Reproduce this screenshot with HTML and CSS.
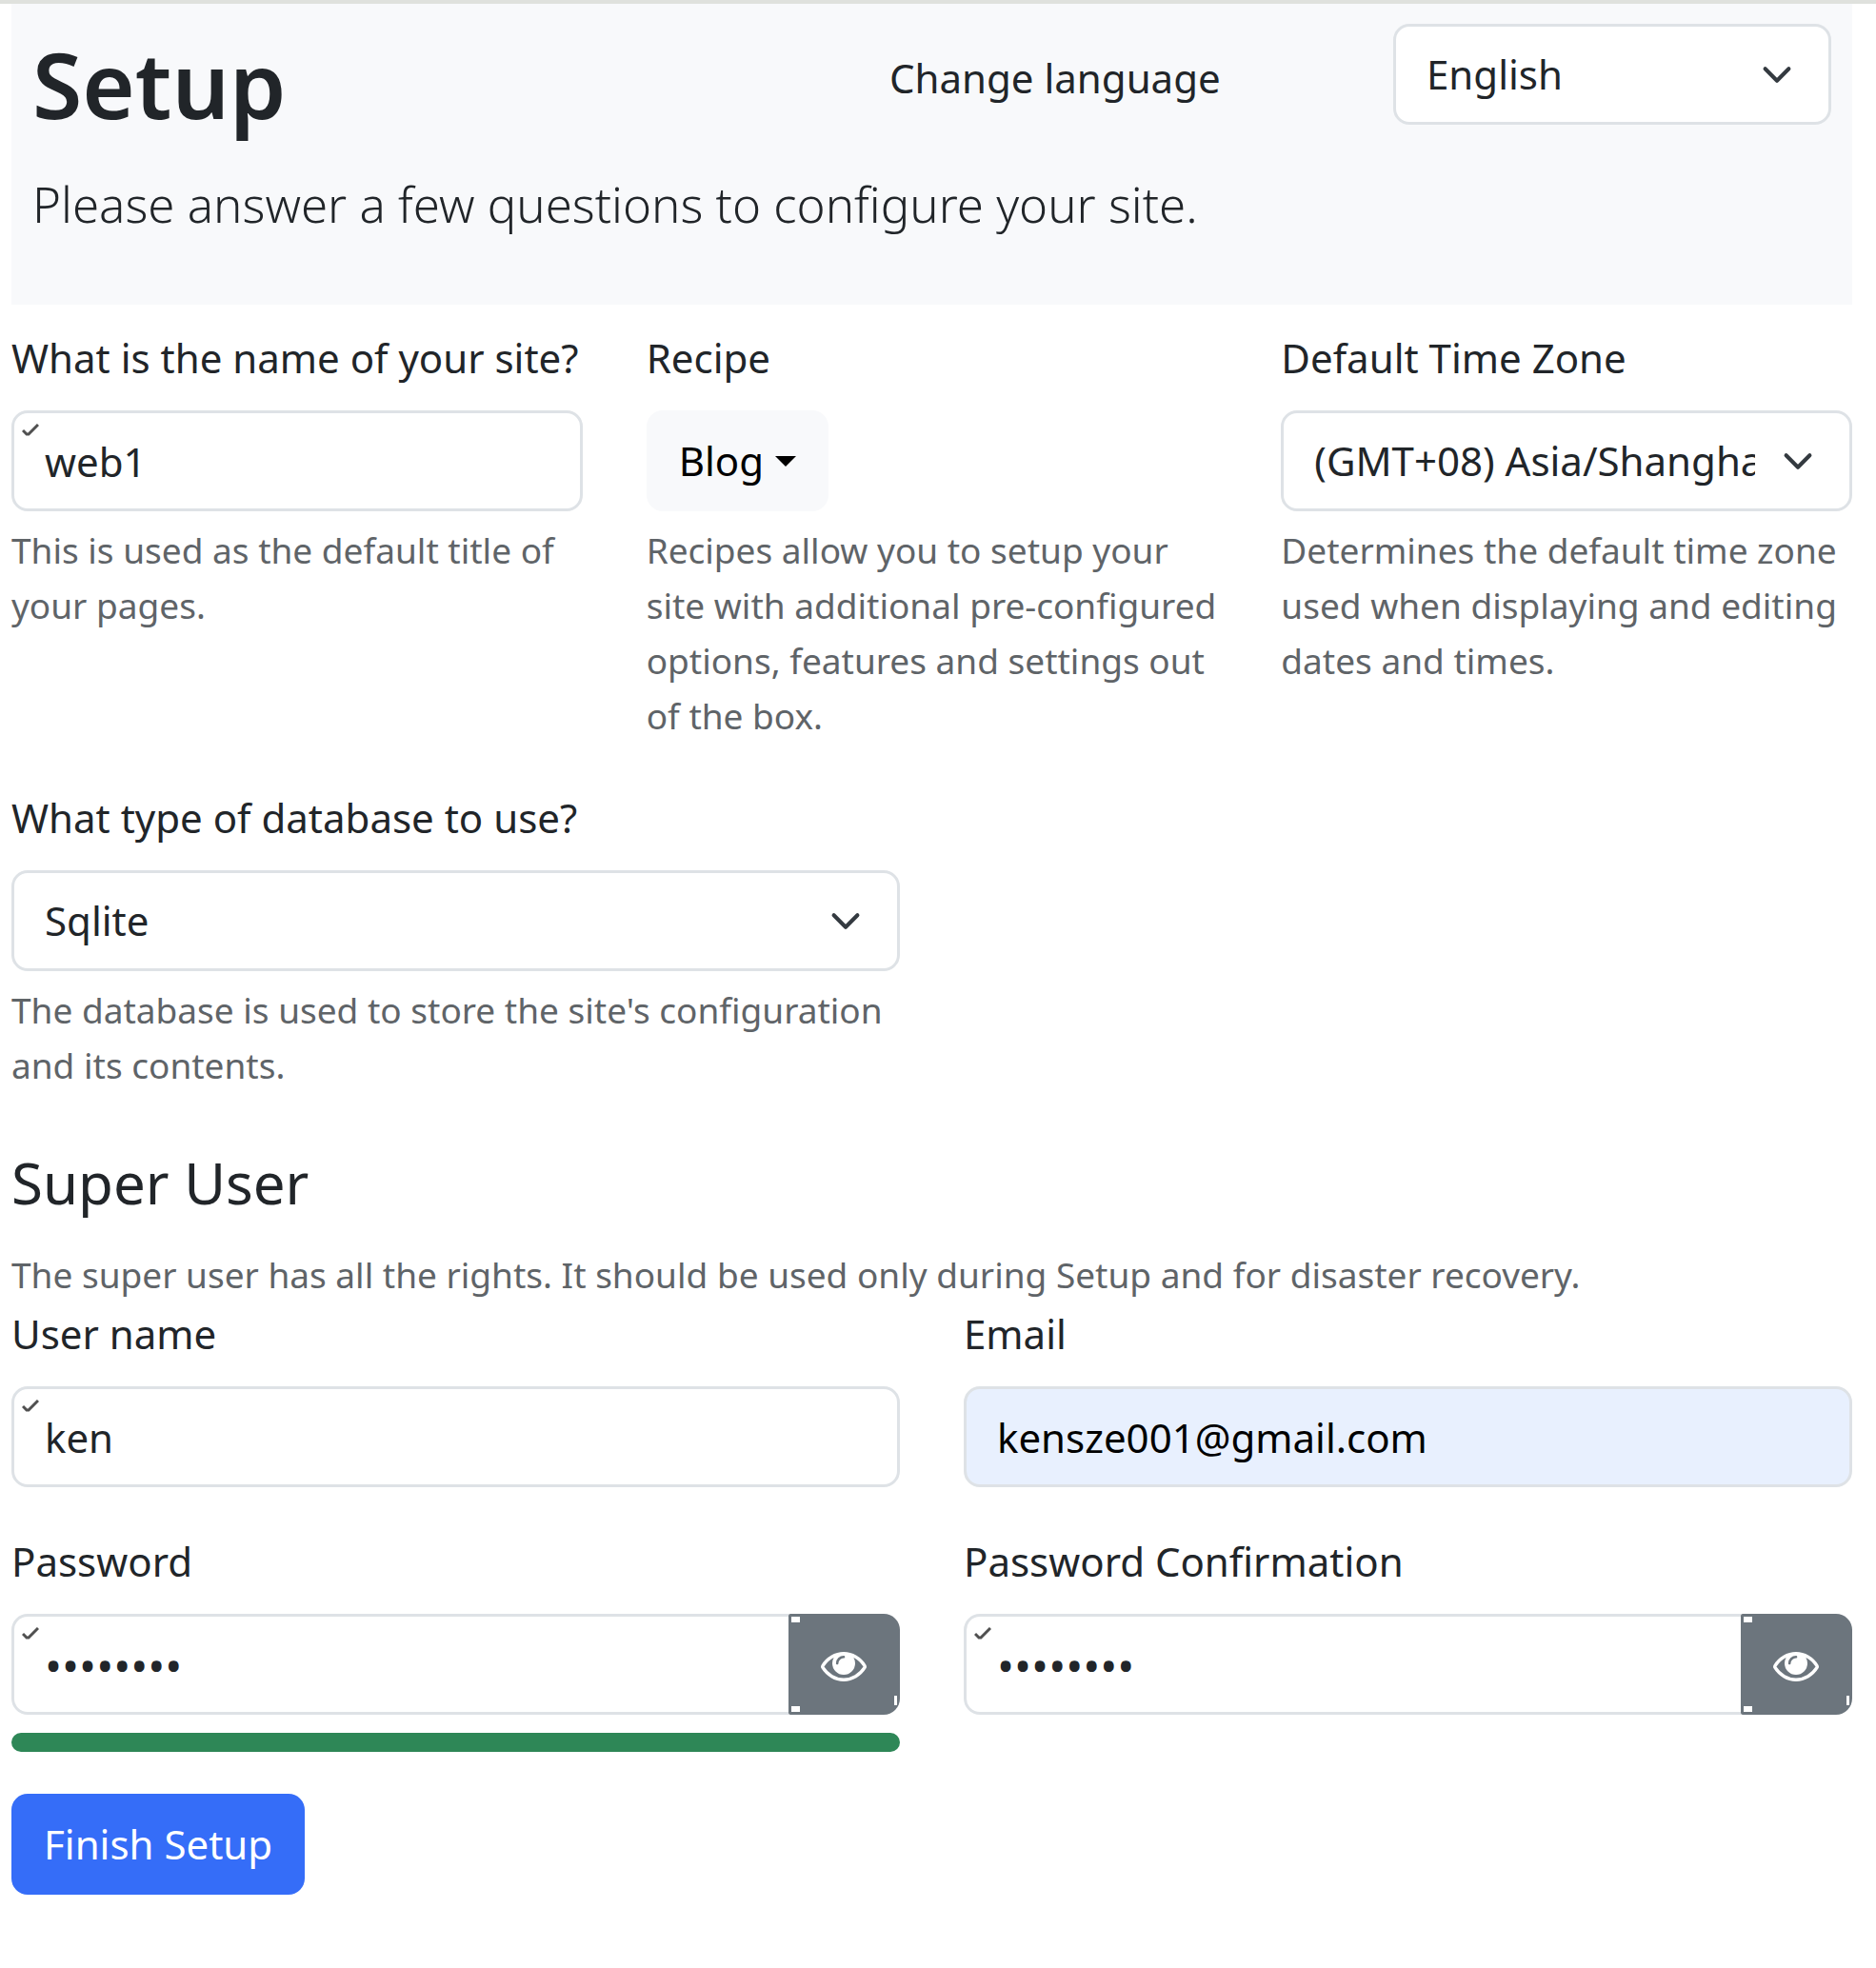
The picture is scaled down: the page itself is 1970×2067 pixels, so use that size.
FILE: index.html
```html
<!DOCTYPE html>
<html lang="en">
<head>
  <meta charset="utf-8">
  <meta name="viewport" content="width=device-width, initial-scale=1">
  <title>Setup</title>
  <link rel="stylesheet" href="styles.css">
</head>
<body>
  <svg class="sprite" aria-hidden="true">
    <symbol id="icon-eye" viewBox="0 384 1792 1152">
      <path d="M1664 960q-152-236-381-353 61 104 61 225 0 185-131.5 316.5t-316.5 131.5-316.5-131.5-131.5-316.5q0-121 61-225-229 117-381 353 133 205 333.5 326.5t434.5 121.5 434.5-121.5 333.5-326.5zm-720-384q0-20-14-34t-34-14q-125 0-214.5 89.5t-89.5 214.5q0 20 14 34t34 14 34-14 14-34q0-86 61-147t147-61q20 0 34-14t14-34zm848 384q0 34-20 69-140 230-376.5 368.5t-499.5 138.5-499.5-139-376.5-368q-20-35-20-69t20-69q140-229 376.5-368t499.5-139 499.5 139 376.5 368q20 35 20 69z"/>
    </symbol>
  </svg>
  <form class="page">
    <header class="banner">
      <div class="banner-row">
        <h1 class="title">Setup</h1>
        <label class="language-label" for="language">Change language</label>
        <select class="control select" id="language"><option>English</option></select>
      </div>
      <p class="lead">Please answer a few questions to configure your site.</p>
    </header>

    <section class="row row-thirds">
      <div class="field">
        <label class="label" for="site-name">What is the name of your site?</label>
        <input class="control is-checked" id="site-name" type="text" value="web1">
        <p class="hint">This is used as the default title of your pages.</p>
      </div>
      <div class="field">
        <label class="label" for="recipe">Recipe</label>
        <button class="button button-light" id="recipe" type="button">Blog<span class="caret"></span></button>
        <p class="hint">Recipes allow you to setup your site with additional pre-configured options, features and settings out of the box.</p>
      </div>
      <div class="field">
        <label class="label" for="time-zone">Default Time Zone</label>
        <select class="control select" id="time-zone"><option>(GMT+08) Asia/Shanghai</option></select>
        <p class="hint">Determines the default time zone used when displaying and editing dates and times.</p>
      </div>
    </section>

    <section class="row row-halves">
      <div class="field">
        <label class="label" for="database">What type of database to use?</label>
        <select class="control select" id="database"><option>Sqlite</option></select>
        <p class="hint">The database is used to store the site's configuration and its contents.</p>
      </div>
    </section>

    <h2 class="subtitle">Super User</h2>
    <p class="hint hint-section">The super user has all the rights. It should be used only during Setup and for disaster recovery.</p>

    <section class="row row-halves">
      <div class="field">
        <label class="label" for="user-name">User name</label>
        <input class="control is-checked" id="user-name" type="text" value="ken">
      </div>
      <div class="field">
        <label class="label" for="email">Email</label>
        <input class="control is-autofilled" id="email" type="email" value="kensze001@gmail.com">
      </div>
      <div class="field">
        <label class="label" for="password">Password</label>
        <div class="input-group">
          <input class="control is-checked" id="password" type="password" value="password">
          <button class="button toggle" type="button" aria-label="Show password"><svg class="eye" aria-hidden="true"><use href="#icon-eye"/></svg></button>
        </div>
        <div class="strength" role="progressbar" aria-label="Password strength" aria-valuenow="100" aria-valuemin="0" aria-valuemax="100"><div class="strength-bar" style="width: 100%"></div></div>
      </div>
      <div class="field">
        <label class="label" for="password-confirm">Password Confirmation</label>
        <div class="input-group">
          <input class="control is-checked" id="password-confirm" type="password" value="password">
          <button class="button toggle" type="button" aria-label="Show password confirmation"><svg class="eye" aria-hidden="true"><use href="#icon-eye"/></svg></button>
        </div>
      </div>
    </section>

    <button class="button button-primary" type="submit">Finish Setup</button>
  </form>
</body>
</html>
```

FILE: styles.css
```css
*,
*::before,
*::after {
  box-sizing: border-box;
}

body {
  margin: 0;
  border-top: 4px solid #dfe1dd;
  background: #fff;
  color: #212529;
  font-family: "Noto Sans", "Open Sans", sans-serif;
  font-size: 42px;
  line-height: 66px;
}

h1,
h2,
p {
  margin: 0;
}

.sprite {
  display: none;
}

.page {
  padding: 0 25px 66px 12px;
}

/* Banner */

.banner {
  padding: 21px 22px 64px;
  background: #f8f9fb;
}

.banner-row {
  display: grid;
  grid-template-columns: 900fr 529fr 460fr;
  align-items: start;
}

.title {
  padding-top: 8px;
  font-size: 95px;
  font-weight: 600;
  line-height: 110px;
}

.language-label {
  padding-top: 24px;
}

.lead {
  margin-top: 29px;
  font-size: 51px;
  font-weight: 300;
  line-height: 84px;
}

/* Form grid */

.row {
  display: grid;
  gap: 45px 67px;
}

.row-thirds {
  grid-template-columns: repeat(3, minmax(0, 1fr));
  margin: 23px 0 45px;
}

.row-halves {
  grid-template-columns: repeat(2, minmax(0, 1fr));
}

.label {
  display: block;
  margin-bottom: 22px;
  white-space: nowrap;
}

.hint {
  margin-top: 12px;
  color: #5f6468;
  font-size: 37px;
  line-height: 58px;
}

.subtitle {
  margin-top: 58px;
  font-size: 60px;
  font-weight: 400;
  line-height: 72px;
}

.hint-section {
  margin-top: 32px;
}

/* Controls */

.control {
  display: block;
  width: 100%;
  min-width: 0;
  height: 106px;
  margin: 0;
  padding: 0 32px;
  border: 3px solid #dee2e6;
  border-radius: 17px;
  outline: 0;
  background-color: #fff;
  background-repeat: no-repeat;
  color: #212529;
  font: inherit;
}

.control[type="password"] {
  font-size: 48px;
}

.select {
  padding-right: 99px;
  appearance: none;
  background-image: url("data:image/svg+xml,%3Csvg xmlns='http://www.w3.org/2000/svg' viewBox='0 0 16 16'%3E%3Cpath fill='none' stroke='%23343a40' stroke-linecap='round' stroke-linejoin='round' stroke-width='2' d='m2 5 6 6 6-6'/%3E%3C/svg%3E");
  background-position: right 32px center;
  background-size: 44px 33px;
}

.is-checked {
  background-image: url("data:image/svg+xml,%3Csvg xmlns='http://www.w3.org/2000/svg' viewBox='0 0 18 13'%3E%3Cpath fill='none' stroke='%23505050' stroke-width='3' d='M1 7l4 4h2L17 1'/%3E%3C/svg%3E");
  background-position: 8px 11px;
  background-size: 18px 13px;
}

.is-autofilled {
  background-color: #e8f0fe;
  color: #000;
}

.button {
  display: inline-flex;
  align-items: center;
  justify-content: center;
  height: 106px;
  margin: 0;
  padding: 0 34px;
  border: 0;
  border-radius: 17px;
  font: inherit;
  cursor: pointer;
}

.field > .button {
  display: flex;
}

.button-light {
  background: #f8f9fb;
  color: #000;
}

.caret {
  margin-left: 12px;
  border: 11px solid transparent;
  border-top-color: #000;
  border-bottom: 0;
}

.button-primary {
  margin-top: 44px;
  background: #356df8;
  color: #fff;
}

.input-group {
  display: flex;
}

.input-group .control {
  flex: 1;
  border-right: 0;
  border-radius: 17px 0 0 17px;
}

.toggle {
  flex: none;
  width: 117px;
  padding: 4px 2px 0 0;
  border-radius: 2px 17px 17px 2px;
  background:
    linear-gradient(#fff, #fff) 3px 3px / 9px 6px no-repeat,
    linear-gradient(#fff, #fff) 3px 97px / 9px 6px no-repeat,
    linear-gradient(#fff, #fff) 111px 86px / 3px 10px no-repeat,
    #6c757d;
  color: #fff;
}

.eye {
  width: 48px;
  height: 31px;
  fill: currentColor;
}

.strength {
  margin-top: 19px;
  height: 20px;
  border-radius: 10px;
  background: #e9ecef;
  overflow: hidden;
}

.strength-bar {
  height: 100%;
  background: #2e8757;
}
```
